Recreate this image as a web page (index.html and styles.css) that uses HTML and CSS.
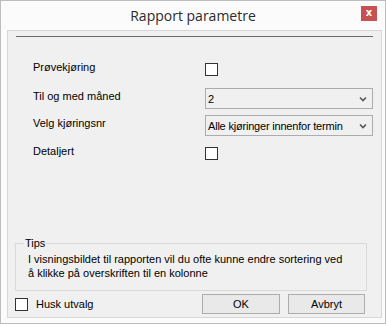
FILE: index.html
```html
<!DOCTYPE html>
<html lang="no">
<head>
<meta charset="utf-8">
<title>Rapport parametre</title>
<link rel="stylesheet" href="styles.css">
</head>
<body>
<div class="window">
  <div class="titlebar">
    <div class="title">Rapport parametre</div>
    <div class="close">x</div>
  </div>
  <div class="panel">
    <div class="rule"></div>
    <div class="rows">
      <div class="row row1">
        <span class="label">Prøvekjøring</span>
        <span class="check"></span>
      </div>
      <div class="row row2">
        <span class="label">Til og med måned</span>
        <div class="select"><span>2</span>
          <svg class="chev" width="8" height="6" viewBox="0 0 8 6"><path d="M1 1.5 L4 4.5 L7 1.5" fill="none" stroke="#555" stroke-width="1.6"/></svg>
        </div>
      </div>
      <div class="row row3">
        <span class="label">Velg kjøringsnr</span>
        <div class="select"><span class="condensed">Alle kjøringer innenfor termin</span>
          <svg class="chev" width="8" height="6" viewBox="0 0 8 6"><path d="M1 1.5 L4 4.5 L7 1.5" fill="none" stroke="#555" stroke-width="1.6"/></svg>
        </div>
      </div>
      <div class="row row4">
        <span class="label">Detaljert</span>
        <span class="check"></span>
      </div>
    </div>
    <fieldset class="tips">
      <legend>Tips</legend>
      <p>I visningsbildet til rapporten vil du ofte kunne endre sortering ved å klikke på overskriften til en kolonne</p>
    </fieldset>
    <div class="footer">
      <span class="check"></span>
      <span class="husk">Husk utvalg</span>
      <div class="buttons">
        <button class="btn ok">OK</button>
        <button class="btn cancel">Avbryt</button>
      </div>
    </div>
  </div>
</div>
</body>
</html>
```
FILE: styles.css
```css
* { box-sizing: border-box; }
html, body { margin: 0; padding: 0; background: #ffffff; }
body { font-family: "Liberation Sans", Arial, sans-serif; font-size: 11px; color: #000; }

.window {
  width: 386px;
  height: 324px;
  border: 1px solid #bdbdbd;
  background: #fbfbfb;
  display: flex;
  flex-direction: column;
}

.titlebar {
  height: 29px;
  display: grid;
  grid-template-columns: 1fr auto 1fr;
  align-items: start;
}
.title {
  grid-column: 2;
  font-family: "Open Sans", "Noto Sans", sans-serif;
  font-size: 14px;
  color: #2b2b2b;
  line-height: 20px;
  margin-top: 5px;
}
.close {
  grid-column: 3;
  justify-self: end;
  margin: 5px 8px 0 0;
  width: 16px;
  height: 15px;
  background: #c75050;
  color: #fff;
  font-family: "DejaVu Sans", sans-serif;
  font-weight: bold;
  font-size: 10px;
  line-height: 13px;
  text-align: center;
}

.panel {
  flex: none;
  height: 288px;
  margin: 0 3px 0 6px;
  background: #f0f0f0;
  border: 1px solid #d7d7d7;
  display: flex;
  flex-direction: column;
}

.rule {
  height: 1px;
  margin: 5px 8px 0 8px;
  background: #6a6a6a;
}

.rows { margin-top: 22px; padding-left: 25px; }
.row { display: flex; align-items: center; height: 21px; }
.row2 { margin-top: 8px; }
.row3 { margin-top: 6px; }
.row4 { margin-top: 7px; }
.label { width: 172px; align-self: flex-start; line-height: 13px; margin-top: 2px; }

.check {
  display: inline-block;
  width: 13px;
  height: 13px;
  border: 1px solid #333;
  background: #fff;
}

.select {
  width: 168px;
  height: 21px;
  border: 1px solid #acacac;
  background: #f0f0f0;
  display: flex;
  align-items: center;
  justify-content: space-between;
  padding: 0 5px 0 2px;
}
.condensed { letter-spacing: -0.2px; }
.chev { display: block; }

.tips {
  margin: 73px 0 0 7px;
  width: 352px;
  height: 54px;
  padding: 0 0 0 12px;
  border: 1px solid #d9d9d9;
  min-width: 0;
}
.tips legend {
  padding: 0 1px;
  margin-left: -4px;
  line-height: 13px;
}
.tips p {
  margin: 2px 0 0 0;
  width: 322px;
  line-height: 14px;
}

.footer {
  display: flex;
  align-items: center;
  height: 20px;
  margin: 3px 0 0 7px;
}
.husk { margin-left: 8px; }
.buttons { margin-left: auto; margin-right: 16px; display: flex; gap: 8px; }
.btn {
  font-family: "Liberation Sans", Arial, sans-serif;
  font-size: 11px;
  color: #000;
  height: 20px;
  width: 78px;
  background: #e9e9e9;
  border: 1px solid #adadad;
  padding: 0;
  margin: 0;
}
.btn.cancel { width: 77px; }
```
